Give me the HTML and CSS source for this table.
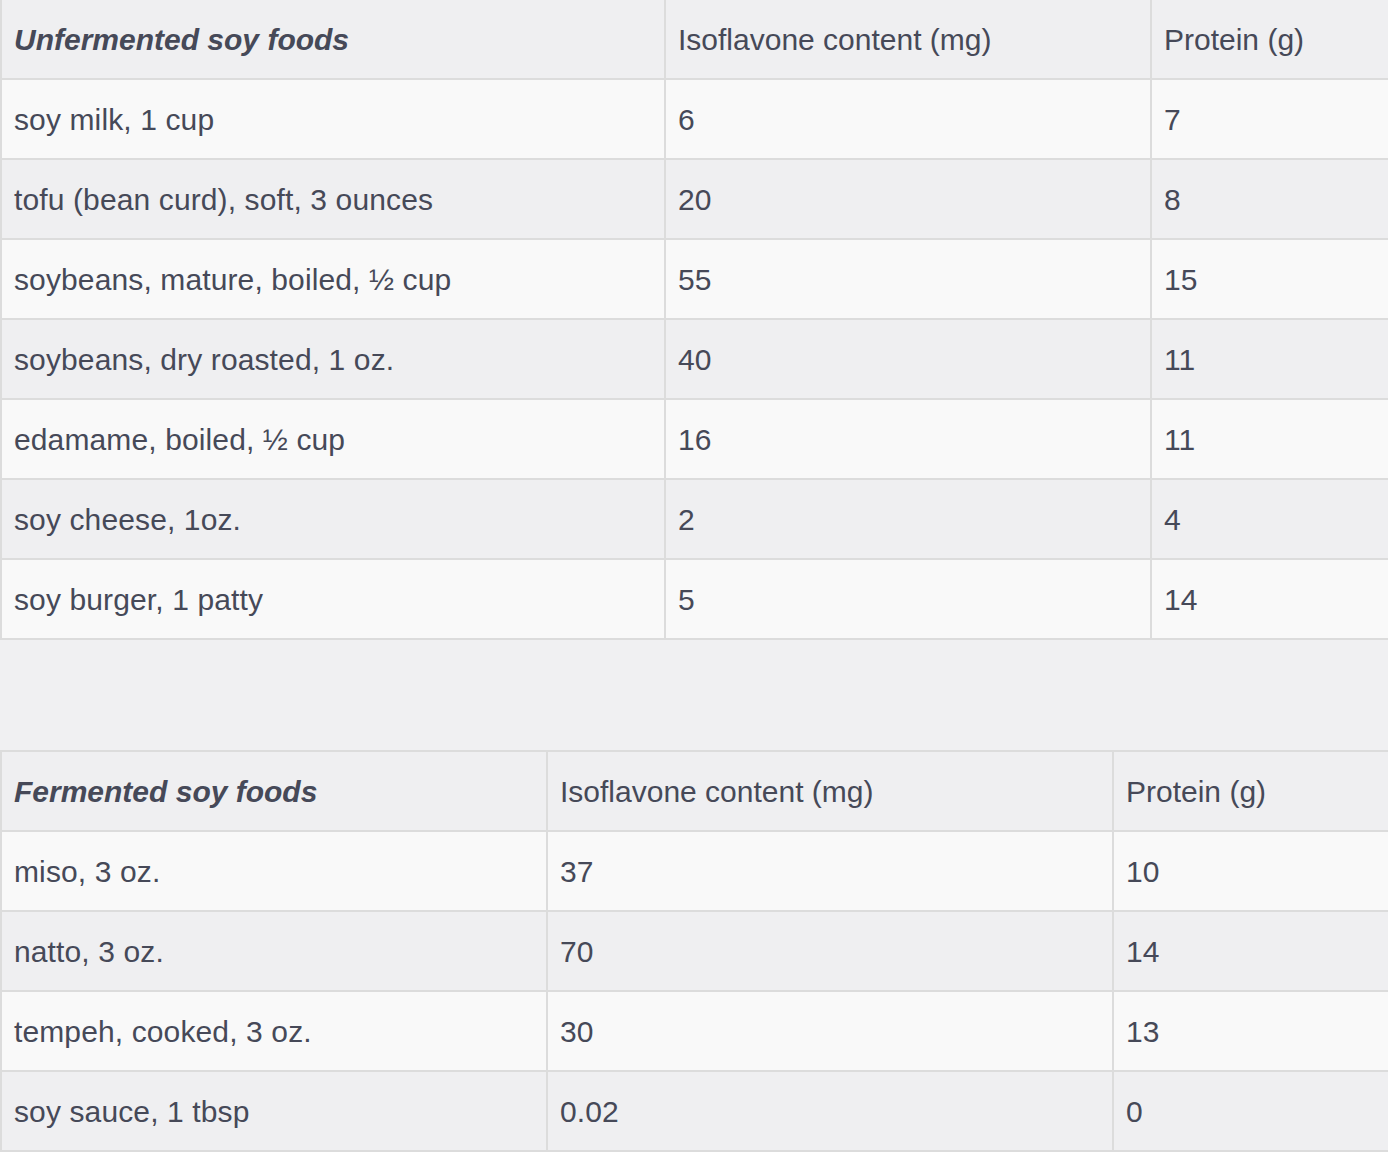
FILE: index.html
```html
<!DOCTYPE html>
<html lang="en">
<head>
<meta charset="utf-8">
<title>Soy foods</title>
<link rel="stylesheet" href="styles.css">
</head>
<body>
<table class="soy soy-first">
  <colgroup><col class="c1a"><col class="c2a"><col></colgroup>
  <thead>
    <tr><th class="name">Unfermented soy foods</th><th>Isoflavone content (mg)</th><th>Protein (g)</th></tr>
  </thead>
  <tbody>
    <tr><td>soy milk, 1 cup</td><td>6</td><td>7</td></tr>
    <tr><td>tofu (bean curd), soft, 3 ounces</td><td>20</td><td>8</td></tr>
    <tr><td>soybeans, mature, boiled, ½ cup</td><td>55</td><td>15</td></tr>
    <tr><td>soybeans, dry roasted, 1 oz.</td><td>40</td><td>11</td></tr>
    <tr><td>edamame, boiled, ½ cup</td><td>16</td><td>11</td></tr>
    <tr><td>soy cheese, 1oz.</td><td>2</td><td>4</td></tr>
    <tr><td>soy burger, 1 patty</td><td>5</td><td>14</td></tr>
  </tbody>
</table>
<table class="soy soy-second">
  <colgroup><col class="c1b"><col class="c2b"><col></colgroup>
  <thead>
    <tr><th class="name">Fermented soy foods</th><th>Isoflavone content (mg)</th><th>Protein (g)</th></tr>
  </thead>
  <tbody>
    <tr><td>miso, 3 oz.</td><td>37</td><td>10</td></tr>
    <tr><td>natto, 3 oz.</td><td>70</td><td>14</td></tr>
    <tr><td>tempeh, cooked, 3 oz.</td><td>30</td><td>13</td></tr>
    <tr><td>soy sauce, 1 tbsp</td><td>0.02</td><td>0</td></tr>
  </tbody>
</table>
</body>
</html>
```
FILE: styles.css
```css
html, body {
  margin: 0;
  padding: 0;
  background: #f0f0f2;
  overflow: hidden;
}
body {
  font-family: "Liberation Sans", Arial, sans-serif;
  font-size: 30px;
  color: #464958;
}
.soy {
  width: 100%;
  table-layout: fixed;
  border-collapse: separate;
  border-spacing: 0;
  border-top: 2px solid #dcdcdc;
}
.soy-first { margin-top: -2px; }
.soy-second { margin-top: 110px; }
.c1a { width: 664px; }
.c2a { width: 486px; }
.c1b { width: 546px; }
.c2b { width: 566px; }
.soy th, .soy td {
  box-sizing: border-box;
  height: 80px;
  padding: 1px 12px 0;
  border-left: 2px solid #dcdcdc;
  border-bottom: 2px solid #dcdcdc;
  text-align: left;
  vertical-align: middle;
  font-weight: normal;
  white-space: nowrap;
}
.soy td { letter-spacing: 0.12px; }
.soy th.name {
  font-weight: bold;
  font-style: italic;
}
.soy thead tr { background: #efeff1; }
.soy tbody tr:nth-child(odd) { background: #f9f9f9; }
.soy tbody tr:nth-child(even) { background: #efeff1; }
```
